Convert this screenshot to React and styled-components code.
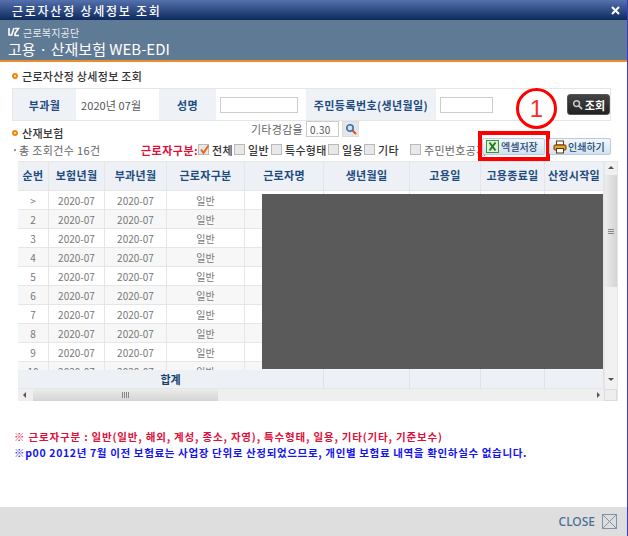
import React from "react";
import styled, { createGlobalStyle } from "styled-components";

const Global = createGlobalStyle`
  html, body { margin: 0; padding: 0; background: #fff; overflow: hidden; }
  * { box-sizing: border-box; }
  body { font-family: "Noto Sans CJK KR", "Noto Sans", sans-serif; font-size: 11px; }
`;
const Page = styled.div`
  position: relative; width: 628px; height: 536px; display: flex; flex-direction: column;
  background: #fff; border-right: 1px solid #3a3ad0; overflow: hidden;
`;
const TitleBar = styled.div`
  height: 20px; flex: none; display: flex; align-items: center; justify-content: space-between;
  padding: 0 7px 0 12px; background: linear-gradient(#5570ad, #0c2a5e);
  color: #fff; font-size: 12px; font-weight: 500; letter-spacing: 1.75px;
`;
const CloseX = styled.svg`width: 9px; height: 9px;`;
const Brand = styled.div`
  height: 42px; flex: none; background: #5f7a94; border-bottom: 2px solid #f08c28;
  padding: 5px 0 0 8px; color: #fff; display: flex; flex-direction: column;
`;
const BrandTop = styled.div`display: flex; align-items: center; gap: 3px; height: 14px; font-size: 10px; letter-spacing: 0.2px; color: #e8edf2;`;
const BrandName = styled.div`font-size: 15px; line-height: 18px; margin-top: 1px; white-space: nowrap; letter-spacing: 0;`;
const Main = styled.div`flex: 1; min-height: 0; display: flex; flex-direction: column; padding: 0 16px 0 12px;`;
const Section = styled.div`
  display: flex; align-items: center; gap: 4px; font-size: 11px; font-weight: 500; color: #333;
  letter-spacing: 0.3px; white-space: nowrap;
`;
const TopSection = styled(Section)`height: 25px; margin-top: 1px;`;
const LowerSection = styled(Section)`margin-bottom: -3px;`;
const Dot = styled.span`
  width: 6px; height: 6px; border-radius: 50%; border: 2px solid #f0880f; background: #fff2b0; flex: none;
`;
const SearchTable = styled.div`
  height: 33px; display: grid; grid-template-columns: 63px 83px 57px 90px 130px 1fr; border: 1px solid #e6e6e6;
`;
const Label = styled.div`
  background: #eef2f6; color: #1d4a80; font-weight: 700; display: flex; align-items: center; justify-content: center;
  white-space: nowrap; letter-spacing: 0.4px;
`;
const Value = styled.div`
  display: flex; align-items: center; padding-left: ${(p) => p.$pad || 4}px; color: #555; letter-spacing: 0.1px; white-space: nowrap;
`;
const TextInput = styled.div`width: ${(p) => p.$w}px; height: 16px; background: #fff; border: 1px solid #ccc;`;
const DarkButton = styled.div`
  width: 43px; height: 21px; margin-left: auto; border-radius: 3px; background: linear-gradient(#444, #222); border: 1px solid #555;
  color: #fff; font-weight: 700; font-size: 11px; display: flex; align-items: center; justify-content: center; gap: 2px;
`;
const Tools = styled.div`display: flex; flex-direction: column; height: 40px;`;
const ToolsTop = styled.div`height: 17px; display: flex; align-items: flex-end; justify-content: space-between;`;
const ReduceGroup = styled.div`display: flex; align-self: flex-start; align-items: center; margin-right: 252px; color: #666; gap: 3px; letter-spacing: 0.3px; white-space: nowrap; padding-top: 0;`;
const RateInput = styled.div`
  width: 33px; height: 16px; border: 1px solid #ccc; display: flex; align-items: center; padding-left: 3px; font-size: 10px; color: #555;
`;
const ZoomBtn = styled.div`
  width: 17px; height: 16px; background: #e6e6e6; border: 1px solid #ddd; display: flex; align-items: center; justify-content: center;
`;
const ToolsRow = styled.div`height: 20px; padding-top: 3px; display: flex; align-items: center; position: relative; white-space: nowrap;`;
const Count = styled.div`width: 129px; color: #666; letter-spacing: 0.35px; padding-left: 2px; display: flex; gap: 3px; align-items: center;`;
const Tiny = styled.span`width: 2px; height: 2px; background: #999; display: inline-block;`;
const WorkerLabel = styled.div`width: 57px; color: #e0103a; font-weight: 700; letter-spacing: 0.5px;`;
const Check = styled.label`
  display: flex; align-items: center; gap: 3px; width: ${(p) => p.$w}px; color: ${(p) => (p.$muted ? "#666" : "#333")};
  font-weight: ${(p) => (p.$muted ? 400 : 500)}; letter-spacing: 0.3px; flex: none;
`;
const Box = styled.span`
  width: 11px; height: 11px; background: #e8e8e8; border: 1px solid #b9b9b9; position: relative; flex: none;
`;
const Tick = styled.svg`position: absolute; left: -1px; top: -2px; width: 13px; height: 13px;`;
const Buttons = styled.div`position: absolute; right: 0; top: 0; display: flex; gap: 4px; background: #fff; padding-left: 2px;`;
const ToolButton = styled.div`
  position: relative; width: ${(p) => p.$w}px; height: 17px; background: linear-gradient(#f4f8fc, #d3e1ef); border: 1px solid #b9cbdc; border-radius: 2px;
  display: flex; align-items: center; gap: ${(p) => p.$gap}px; padding-left: 3px; font-weight: 500; color: #234a75; font-size: 10px; letter-spacing: 0;
`;
const RedBox = styled.span`
  position: absolute; left: -5px; top: -8px; width: 72px; height: 30px; border: 4px solid #f00; pointer-events: none;
`;
const Grid = styled.div`
  margin: 0 -7px 0 6px; height: 240px; border: 1px solid #e6e6e6; border-width: 1px 1px 0 0;
  display: grid; grid-template-columns: 1fr 13px; grid-template-rows: 227px 12px; background: #eee; position: relative;
`;
const TableArea = styled.div`display: flex; flex-direction: column; overflow: hidden; min-width: 0; background: #fff;`;
const TRow = styled.div`
  flex: none; display: grid; height: ${(p) => p.$h}px; grid-template-columns: 31px 56px 62px 78px 79px 86px 71px 64px 59px;
  background: ${(p) => p.$bg || "#fff"}; border-bottom: 1px solid #e6e6e6;
`;
const Scroller = styled.div`height: 179px; overflow: hidden; flex: none;`;
const Cell = styled.div`
  display: flex; align-items: center; justify-content: center; white-space: nowrap; overflow: hidden;
  border-right: 1px solid #e6e6e6; color: #777; font-size: 10px;
`;
const Head = styled(Cell)`color: #1d4a80; font-weight: 700; font-size: 11px; background: #edf1f5; letter-spacing: 0.3px; border-color: #e3e7ea; padding-bottom: 2px;`;
const Sum = styled(Cell)`background: #edf1f5; color: #173f6e; font-weight: 700; font-size: 11px; border-color: #dfe3e6;`;
const SumWide = styled(Sum)`grid-column: span 5;`;
const VBar = styled.div`
  background: #f1f1f1; display: flex; flex-direction: column; align-items: center; justify-content: space-between; padding: 4px 0 8px; border-left: 1px solid #e6e6e6; position: relative;
`;
const VThumb = styled.div`
  position: absolute; left: 0; right: 0; top: 13px; height: 112px; background: linear-gradient(90deg, #ececec, #d4d4d4);
  display: flex; align-items: center; justify-content: center;
`;
const HBar = styled.div`
  background: #efefef; display: flex; align-items: center; justify-content: space-between; padding: 0 4px 0 5px; position: relative;
`;
const HThumb = styled.div`
  position: absolute; left: 15px; width: 185px; top: 0; bottom: 0; background: linear-gradient(#ececec, #d4d4d4);
  display: flex; align-items: center; justify-content: center;
`;
const Corner = styled.div`background: #eee; border: 1px solid #dcdcdc;`;
const Arrow = styled.span`
  width: 0; height: 0; border: 3px solid transparent;
  ${(p) => p.$dir === "up" && "border-bottom: 3px solid #555; border-top: 0;"}
  ${(p) => p.$dir === "down" && "border-top: 3px solid #555; border-bottom: 0;"}
  ${(p) => p.$dir === "left" && "border-right: 3px solid #555; border-left: 0;"}
  ${(p) => p.$dir === "right" && "border-left: 3px solid #555; border-right: 0;"}
`;
const Grip = styled.span`
  width: ${(p) => (p.$v ? 6 : 7)}px; height: 6px;
  background: repeating-linear-gradient(${(p) => (p.$v ? "0deg" : "90deg")}, #888 0 1px, transparent 1px 2px);
`;
const Mask = styled.div`
  position: absolute; left: 244px; top: 32px; width: 341px; height: 175px; background: #5a5a5a;
`;
const Notes = styled.div`margin-top: 28px; padding-left: 2px; font-weight: 700; font-size: 10.5px; line-height: 16px; white-space: nowrap;`;
const RedNote = styled.div`color: #e0103a; letter-spacing: 0.82px;`;
const BlueNote = styled.div`color: #1414ee; letter-spacing: 0.65px;`;
const Footer = styled.div`
  height: 29px; flex: none; background: #dedede; display: flex; align-items: center; justify-content: flex-end; gap: 7px; padding: 0 10px 0 0;
  color: #4a6f96; font-family: "Noto Sans", sans-serif; font-size: 12px; font-weight: 500;
`;
const Circle = styled.div`
  position: absolute; left: 516px; top: 88px; width: 41px; height: 41px; border-radius: 50%; border: 3px solid #f00; background: #fff;
  color: #f03030; font-family: "Liberation Sans", sans-serif; font-size: 24px; display: flex; align-items: center; justify-content: center;
`;

const Search = ({ c = "#3a6fb0", s = 12 }) => (
  <svg width={s} height={s} viewBox="0 0 12 12" fill="none">
    <circle cx="5" cy="5" r="3.2" stroke={c} strokeWidth="1.6" fill={c === "#ccc" ? "none" : "#cfe3f7"} />
    <path d="M7.5 7.5 11 11" stroke={c === "#ccc" ? "#ccc" : "#d9531e"} strokeWidth="2" />
  </svg>
);
const Excel = () => (
  <svg width="13" height="13" viewBox="0 0 13 13">
    <rect x=".5" y=".5" width="12" height="12" fill="#dff0d8" stroke="#3d9440" />
    <path d="M3.5 2.5 9.5 10.5M9.5 2.5 3.5 10.5" stroke="#1f7a2a" strokeWidth="2" />
  </svg>
);
const Printer = () => (
  <svg width="14" height="14" viewBox="0 0 14 14">
    <rect x="3.5" y="1" width="7" height="4" fill="#fff" stroke="#5b3a12" />
    <rect x="1" y="5" width="12" height="5" rx="1" fill="#e9a22a" stroke="#5b3a12" />
    <rect x="3.5" y="8.5" width="7" height="4.5" fill="#fff" stroke="#5b3a12" />
  </svg>
);
const Logo = () => (
  <svg width="12" height="10" viewBox="0 0 12 10" fill="none" stroke="#fff" strokeWidth="1.6">
    <path d="M1 1v7h2.5M6 1 3.5 8.5" /><path d="M7 1.5h3.5L7 6.5v2h4" />
  </svg>
);

const heads = ["순번", "보험년월", "부과년월", "근로자구분", "근로자명", "생년월일", "고용일", "고용종료일", "산정시작일"];
const rows = [">", "2", "3", "4", "5", "6", "7", "8", "9", "10"];
const options = [["일반", 37], ["특수형태", 57], ["일용", 36], ["기타", 46]];

export default function App() {
  return (
    <Page>
      <Global />
      <TitleBar>
        <span>근로자산정 상세정보 조회</span>
        <CloseX viewBox="0 0 9 9"><path d="M1 1 8 8M8 1 1 8" stroke="#fff" strokeWidth="2" /></CloseX>
      </TitleBar>
      <Brand>
        <BrandTop><Logo />근로복지공단</BrandTop>
        <BrandName>고용 · 산재보험 WEB-EDI</BrandName>
      </Brand>
      <Main>
        <TopSection><Dot />근로자산정 상세정보 조회</TopSection>
        <SearchTable>
          <Label>부과월</Label>
          <Value $pad={5}>2020년 07월</Value>
          <Label>성명</Label>
          <Value><TextInput $w={78} /></Value>
          <Label>주민등록번호(생년월일)</Label>
          <Value><TextInput $w={53} /><DarkButton><Search c="#ccc" s={11} />조회</DarkButton></Value>
        </SearchTable>
        <Tools>
          <ToolsTop>
            <LowerSection><Dot />산재보험</LowerSection>
            <ReduceGroup>기타경감율<RateInput>0.30</RateInput><ZoomBtn><Search /></ZoomBtn></ReduceGroup>
          </ToolsTop>
          <ToolsRow>
            <Count><Tiny />총 조회건수 16건</Count>
            <WorkerLabel>근로자구분:</WorkerLabel>
            <Check $w={36}>
              <Box><Tick viewBox="0 0 13 13"><path d="M3 6.5 5.5 10 10.5 2.5" fill="none" stroke="#f0651e" strokeWidth="2" /></Tick></Box>전체
            </Check>
            {options.map(([t, w]) => <Check key={t} $w={w}><Box />{t}</Check>)}
            <Check $muted $w={72}><Box />주민번호공개</Check>
            <Buttons>
              <ToolButton $w={63} $gap={2}><Excel />엑셀저장<RedBox /></ToolButton>
              <ToolButton $w={62} $gap={1}><Printer />인쇄하기</ToolButton>
            </Buttons>
          </ToolsRow>
        </Tools>
        <Grid>
          <TableArea>
            <TRow $h={29}>{heads.map((h) => <Head key={h}>{h}</Head>)}</TRow>
            <Scroller>
              {rows.map((n, i) => (
                <TRow key={n} $h={19} $bg={i % 2 ? "#f7f7f7" : "#fff"}>
                  <Cell>{n}</Cell><Cell>2020-07</Cell><Cell>2020-07</Cell><Cell>일반</Cell>
                  <Cell /><Cell /><Cell /><Cell /><Cell />
                </TRow>
              ))}
            </Scroller>
            <TRow $h={19}>
              <SumWide>합계</SumWide>
              <Sum /><Sum /><Sum /><Sum />
            </TRow>
          </TableArea>
          <VBar>
            <Arrow $dir="up" />
            <VThumb><Grip $v /></VThumb>
            <Arrow $dir="down" />
          </VBar>
          <HBar>
            <Arrow $dir="left" />
            <HThumb><Grip /></HThumb>
            <Arrow $dir="right" />
          </HBar>
          <Corner />
          <Mask />
        </Grid>
        <Notes>
          <RedNote>※ 근로자구분 : 일반(일반, 해외, 계성, 종소, 자영), 특수형태, 일용, 기타(기타, 기준보수)</RedNote>
          <BlueNote>※p00 2012년 7월 이전 보험료는 사업장 단위로 산정되었으므로, 개인별 보험료 내역을 확인하실수 없습니다.</BlueNote>
        </Notes>
      </Main>
      <Footer>
        CLOSE
        <svg width="15" height="15" viewBox="0 0 15 15" fill="none" stroke="#7d94ab"><rect x=".5" y=".5" width="14" height="14" /><path d="M.5.5l14 14M14.5.5l-14 14" /></svg>
      </Footer>
      <Circle>1</Circle>
    </Page>
  );
}
